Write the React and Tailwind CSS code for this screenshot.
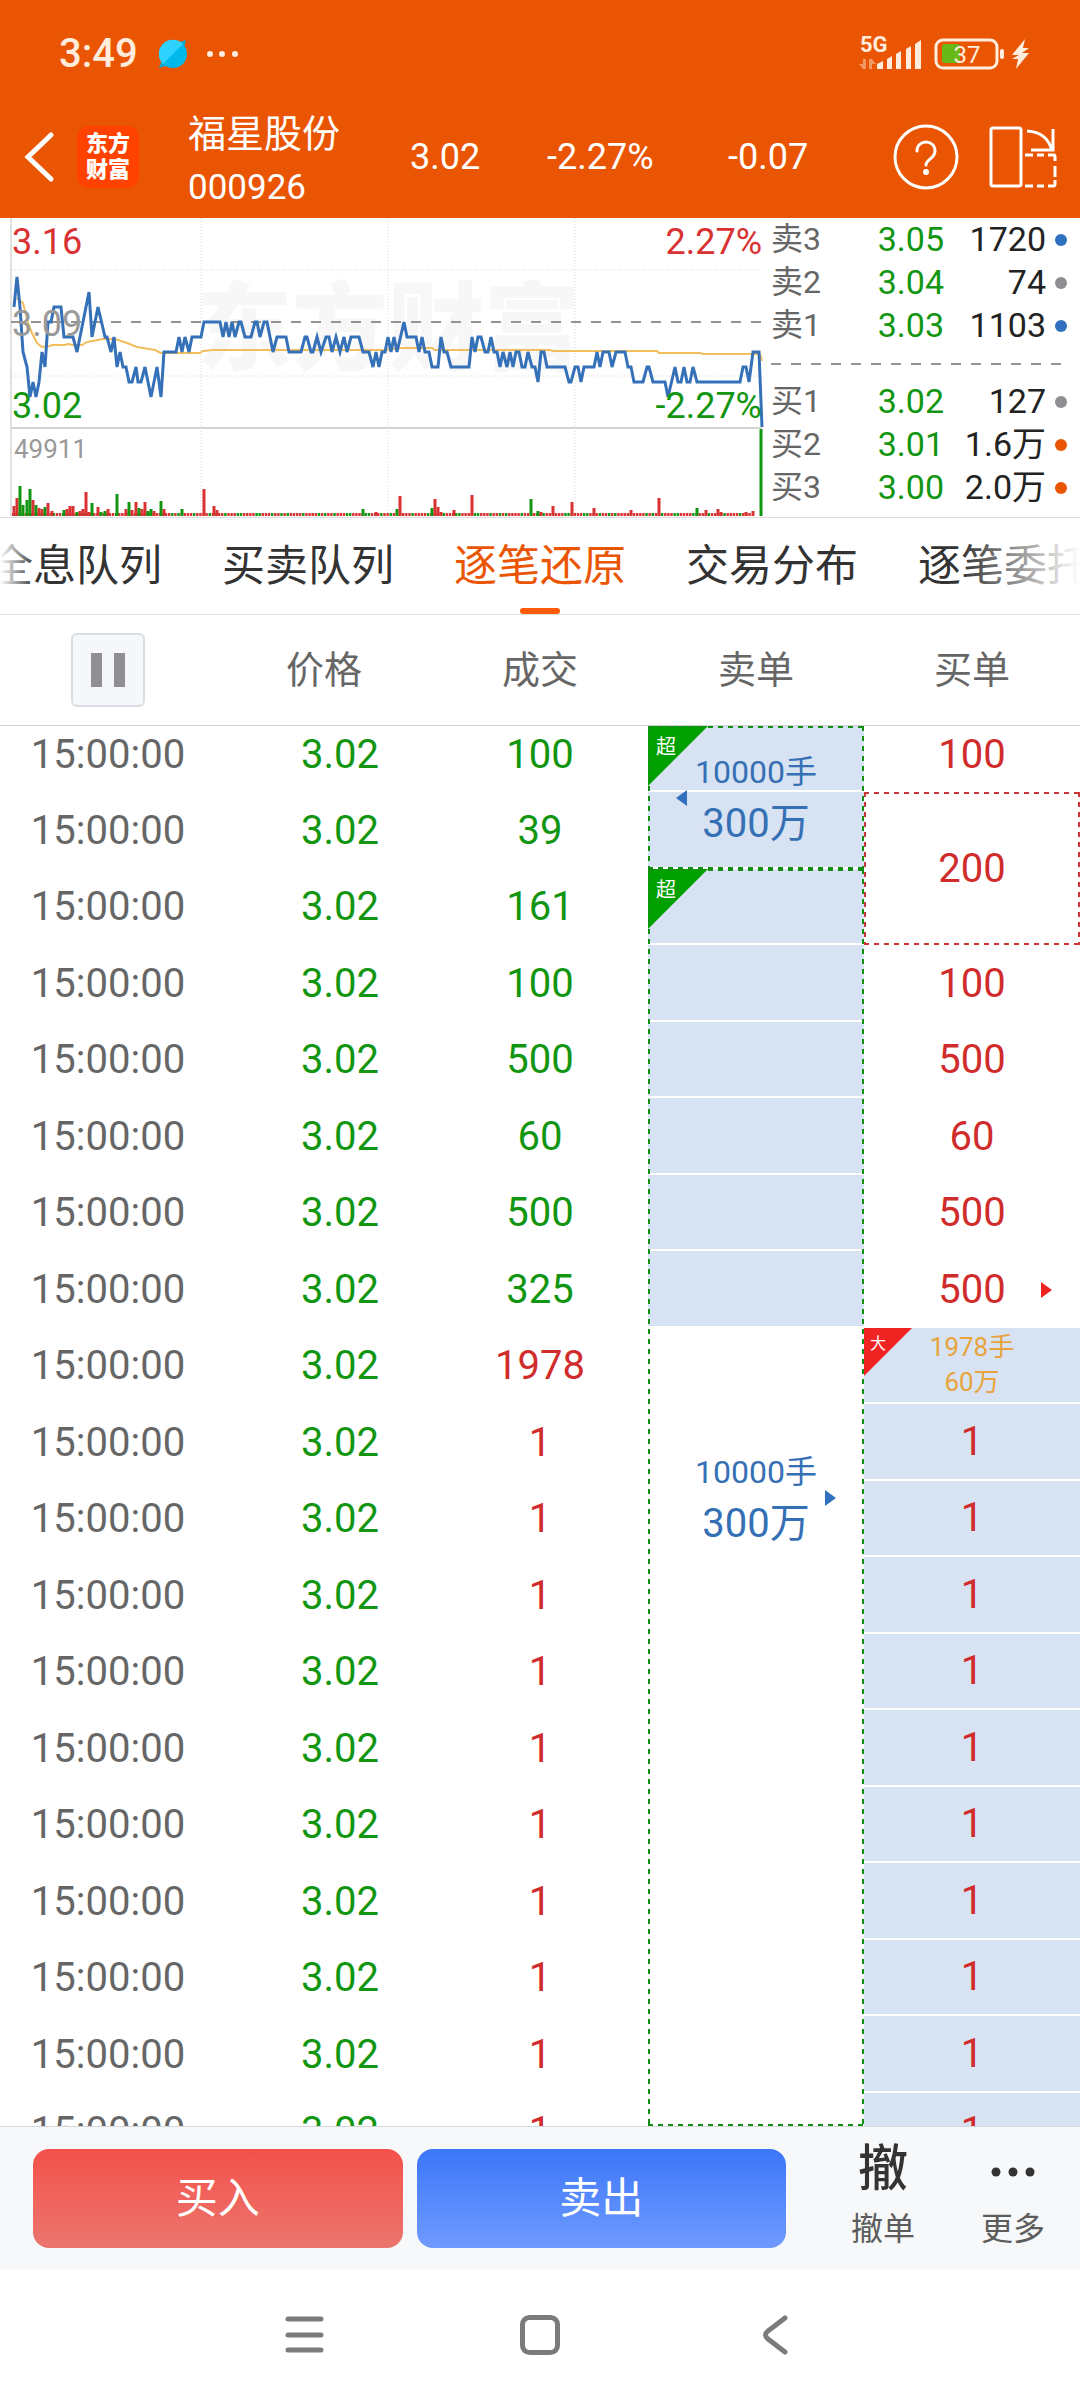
import { useState } from 'react'
import clsx from 'clsx'

const TABS = ['全息队列', '买卖队列', '逐笔还原', '交易分布', '逐笔委托']

const ASKS = [
  { label: '卖3', price: '3.05', qty: '1720', dot: 'bg-[#3070be]' },
  { label: '卖2', price: '3.04', qty: '74', dot: 'bg-[#8e8e93]' },
  { label: '卖1', price: '3.03', qty: '1103', dot: 'bg-[#3070be]' },
]

const BIDS = [
  { label: '买1', price: '3.02', qty: '127', dot: 'bg-[#8e8e93]' },
  { label: '买2', price: '3.01', qty: '1.6万', dot: 'bg-[#ea5504]' },
  { label: '买3', price: '3.00', qty: '2.0万', dot: 'bg-[#ea5504]' },
]

const VOLUMES = [100, 39, 161, 100, 500, 60, 500, 325, 1978, 1, 1, 1, 1, 1, 1, 1, 1, 1, 1]

// One buy order can span several fills
const BUY_LOTS = { 0: 100, 1: 200, 3: 100, 4: 500, 5: 60, 6: 500, 7: 500 }

// [x, cents above / below the previous close]
const PRICE_POINTS = [
  [14, 1], [17, 3], [20, 1], [23, -2], [27, -3], [30, -5], [33, -4], [36, -5], [39, -4], [42, -2], [45, -3],
  [48, 0], [51, 0], [54, 1], [61, 1], [64, -1], [73, -1], [77, -2], [83, 0], [89, 2], [92, -1], [98, 1],
  [105, -1], [107, -1], [111, -2], [114, -1], [117, -3], [120, -2], [123, -3], [126, -3], [129, -4], [132, -4],
  [136, -3], [138, -4], [141, -4], [145, -3], [151, -5], [157, -3], [161, -5], [164, -2], [176, -2], [179, -1],
  [182, -2], [185, -1], [189, -2], [192, -1], [201, -1], [204, 0], [220, 0], [223, -1], [226, 0], [229, -1],
  [232, 0], [235, -1], [239, 0], [241, 0], [245, -1], [251, -1], [255, 0], [257, 0], [260, -1], [264, 0],
  [267, 0], [273, -2], [277, -1], [286, -1], [289, -2], [301, -2], [305, -1], [307, -1], [311, -2], [313, -2],
  [317, -1], [321, -2], [326, -1], [329, -1], [332, -2], [336, -1], [340, -2], [344, -1], [347, -2], [351, -1],
  [359, -1], [363, -2], [369, -2], [373, -3], [376, -2], [379, -3], [382, -2], [385, -2], [388, -1], [391, -2],
  [394, -1], [397, -2], [404, 0], [407, -1], [416, -1], [419, -2], [422, -1], [425, -2], [429, -2], [432, -3],
  [438, -3], [441, -1], [444, -2], [447, -2], [451, -3], [469, -3], [472, -1], [475, -2], [478, -1], [481, -1],
  [485, -2], [488, -2], [491, -1], [494, -2], [497, -2], [500, -3], [503, -2], [507, -3], [510, -2], [513, -3],
  [516, -2], [519, -2], [522, -3], [525, -3], [528, -2], [532, -3], [535, -3], [538, -4], [541, -2], [544, -2],
  [547, -3], [565, -3], [569, -4], [571, -4], [575, -3], [578, -3], [581, -4], [584, -3], [594, -3], [597, -2],
  [600, -3], [603, -2], [609, -2], [612, -3], [616, -2], [625, -2], [628, -3], [631, -3], [634, -4], [643, -4],
  [647, -3], [649, -3], [653, -4], [665, -4], [668, -5], [675, -3], [678, -4], [681, -4], [684, -3], [687, -4],
  [690, -4], [693, -3], [697, -4], [740, -4], [743, -3], [746, -3], [749, -4], [753, -2], [759, -2], [762, -7],
]

const AVERAGE_LINE =
  '17,80 23,85 28,105 32,115 37,125 42,129 50,128 52,127 65,127 68,126 73,127 82,127 87,124 103,121 115,121 127,125 137,129 155,132 161,135 200,135 203,133 213,132 385,132 400,130 432,130 435,132 550,132 553,133 657,133 659,135 700,135 703,136 760,136 762,143'

// [x, height, rising]
const SPIKES = [
  [14, 10, 1], [17, 18, 1], [20, 30, 0], [23, 11, 0], [27, 16, 0], [30, 27, 0], [33, 16, 1], [36, 11, 0],
  [39, 8, 1], [42, 7, 1], [45, 9, 0], [48, 13, 1], [52, 5, 1], [64, 6, 0], [67, 7, 1], [70, 10, 1], [73, 10, 1],
  [77, 4, 0], [80, 5, 1], [83, 7, 1], [86, 24, 1], [89, 4, 1], [92, 13, 0], [98, 9, 1], [101, 4, 0], [105, 5, 0],
  [108, 7, 1], [117, 22, 0], [126, 7, 1], [129, 14, 0], [132, 6, 1], [136, 14, 1], [139, 8, 0], [142, 7, 1],
  [145, 14, 1], [148, 5, 0], [151, 7, 0], [154, 5, 1], [161, 15, 0], [164, 7, 1], [182, 7, 0], [204, 27, 1],
  [214, 10, 1], [217, 6, 1], [363, 7, 0], [376, 4, 1], [397, 7, 0], [400, 20, 1], [432, 8, 0], [435, 17, 1],
  [438, 9, 1], [441, 4, 1], [454, 6, 1], [472, 21, 1], [531, 17, 0], [538, 5, 0], [541, 4, 1], [553, 10, 1],
  [572, 14, 1], [594, 8, 1], [631, 6, 1], [659, 18, 1], [697, 8, 0], [706, 6, 1], [718, 7, 1], [721, 4, 1],
  [746, 4, 1], [753, 5, 1], [761, 87, 0],
]

const RED = '#d83232'
const GREEN = '#129612'

const StatusBar = () => (
  <div className="flex h-[108px] items-center justify-between pl-[59px] pr-[45px] text-[#ffecdc]">
    <div className="flex items-center gap-5">
      <span className="text-[40px] font-medium">3:49</span>
      <svg width="80" height="30" viewBox="0 0 80 30" aria-hidden="true">
        <path d="M1 29 4 20 22 3 28 1 26 9 8 27z" fill="#12a6c8" />
        <circle cx="15" cy="15" r="14" fill="#00b9ea" />
        <path d="M5 25A14 14 0 1 1 25 5z" fill="#2fd2ff" />
        <circle cx="52" cy="15" r="3" fill="currentColor" />
        <circle cx="64" cy="15" r="3" fill="currentColor" />
        <circle cx="77" cy="15" r="3" fill="currentColor" />
      </svg>
    </div>
    <svg width="180" height="40" viewBox="0 0 180 40" fill="currentColor" className="overflow-visible" aria-hidden="true">
      <text x="5" y="18" fontSize="22" fontWeight="700">5G</text>
      <path d="M11 25v10H8l-4-5h4v-5zM14 35V25h3l4 5h-4v5z" opacity=".45" />
      <path d="M22 35v-5l6-3v8zM32 35V25l5-3v13zM41 35V20l5-3v18zM51 35V15l5-3v23zM60 35V10l6-4v29z" />
      <rect x="87" y="10" width="18" height="19" rx="3" fill="#66b916" />
      <rect x="81" y="6" width="61" height="28" rx="7" fill="none" stroke="currentColor" strokeWidth="3" />
      <rect x="145" y="15" width="4" height="10" rx="2" />
      <text x="112" y="29" fontSize="24" textAnchor="middle">37</text>
      <path d="M170 5 157 21h7l-7 4h6l-2 10 13-16h-7l7-5h-6z" />
    </svg>
  </div>
)

const QuoteHeader = () => (
  <div className="flex h-[110px] items-center pb-3 pl-6 pr-[23px] text-white">
    <button type="button" aria-label="返回" className="w-8">
      <svg width="32" height="52" viewBox="0 0 32 52" fill="none" stroke="currentColor" strokeWidth="5">
        <path d="M27 4 4 26 27 48" strokeLinecap="round" />
      </svg>
    </button>
    <div className="ml-[21px] flex h-[62px] w-[62px] flex-col items-center justify-center rounded-xl bg-[#ff4200] text-[22px] leading-[26px] font-black">
      <span>东方</span>
      <span>财富</span>
    </div>
    <div className="ml-[49px] w-[222px] pt-2">
      <h1 className="text-[38px] leading-[54px]">福星股份</h1>
      <p className="text-[35px] leading-[54px]">000926</p>
    </div>
    <span className="w-[137px] text-[36px]">3.02</span>
    <span className="w-[181px] text-[36px]">-2.27%</span>
    <span className="flex-1 text-[36px]">-0.07</span>
    <div className="flex gap-[30px]">
      <button type="button" aria-label="帮助">
        <svg width="66" height="66" viewBox="0 0 66 66" fill="none" stroke="currentColor" strokeWidth="3">
          <circle cx="33" cy="33" r="31" />
          <path d="M24 27c0-12 18-12 18 0 0 8-9 8-9 14" strokeWidth="3" strokeLinecap="round" />
          <circle cx="33" cy="48" r="3" fill="currentColor" stroke="none" />
        </svg>
      </button>
      <button type="button" aria-label="横屏">
        <svg width="68" height="66" viewBox="0 0 68 66" fill="none" stroke="currentColor" strokeWidth="3">
          <rect x="2" y="4" width="30" height="58" rx="2" />
          <path d="M38 7c14 1 21 7 25 19M64 5v21H42" />
          <path d="M36 31h8M48 31h7M59 31h6q1 0 1 2v4M66 42v11M66 56v4q0 2-2 2h-5M55 62h-7M44 62h-8" />
        </svg>
      </button>
    </div>
  </div>
)

const TrendChart = () => (
  <svg viewBox="0 0 764 299" className="h-auto w-full" role="img" aria-label="分时走势">
    <text x="196" y="144" fontSize="96" fontWeight="900" fill="#f7f7f7">东方财富</text>
    <g stroke="#d8d8d8" strokeDasharray="1 2" strokeWidth="1">
      <path d="M12 52H762M12 158H762" />
      <path d="M201 0V298M388 0V298M575 0V298" />
    </g>
    <path d="M11 0V298" stroke="#e0e0e0" strokeWidth="2" />
    <path d="M11 210H762" stroke="#d4d4d4" strokeWidth="2" />
    <path d="M11 104H762" stroke="#949494" strokeWidth="2" strokeDasharray="10 10" />
    <g fontSize="36">
      <text x="12" y="36" fill={RED}>3.16</text>
      <text x="762" y="36" textAnchor="end" fill={RED}>2.27%</text>
    </g>
    <polyline points={AVERAGE_LINE} fill="none" stroke="#f2bd5c" strokeWidth="2" />
    <polyline
      points={PRICE_POINTS.map(([x, c]) => `${x},${104 - c * 15}`).join(' ')}
      fill="none"
      stroke="#3571b8"
      strokeWidth="3"
    />
    <g fontSize="36">
      <text x="12" y="118" fill="#999">3.09</text>
      <text x="12" y="200" fill={GREEN}>3.02</text>
      <text x="762" y="200" textAnchor="end" fill={GREEN}>-2.27%</text>
    </g>
    <text x="14" y="240" fontSize="26" fill="#999">49911</text>
    <g>
      {Array.from({ length: 237 }, (_, i) => (
        <rect key={i} x={12 + i * 3.12} y="295" width="2.4" height="3" fill={i % 5 === 3 || i % 7 === 2 ? GREEN : RED} />
      ))}
      {SPIKES.map(([x, h, up]) => (
        <rect key={x} x={x - 1.5} y={298 - h} width="3" height={h} fill={up ? RED : GREEN} />
      ))}
    </g>
  </svg>
)

const DepthTable = ({ rows, name }) => (
  <table className="w-full text-[34px]" aria-label={name}>
    <tbody>
      {rows.map((row) => (
        <tr key={row.label} className="h-[43px] leading-[43px]">
          <th scope="row" className="p-0 text-left text-[32px] font-normal text-[#666]">{row.label}</th>
          <td className="p-0 text-right text-[#129612]">{row.price}</td>
          <td className="w-[102px] p-0 text-right text-[#222]">{row.qty}</td>
          <td className="w-[21px] p-0">
            <span className={clsx('ml-auto block h-3 w-3 rounded-full', row.dot)} />
          </td>
        </tr>
      ))}
    </tbody>
  </table>
)

const DashedFrame = ({ tone }) => {
  const across = tone === 'green'
    ? 'bg-[repeating-linear-gradient(90deg,#128f12_0_5px,transparent_5px_10px)]'
    : 'bg-[repeating-linear-gradient(90deg,#cc3535_0_5px,transparent_5px_10px)]'
  const down = tone === 'green'
    ? 'bg-[repeating-linear-gradient(180deg,#128f12_0_5px,transparent_5px_10px)]'
    : 'bg-[repeating-linear-gradient(180deg,#cc3535_0_5px,transparent_5px_10px)]'
  return (
    <div className="pointer-events-none absolute inset-0">
      <div className={clsx('absolute inset-x-0 top-0 h-0.5', across)} />
      <div className={clsx('absolute inset-x-0 bottom-0 h-0.5', across)} />
      <div className={clsx('absolute inset-y-0 left-0 w-0.5', down)} />
      <div className={clsx('absolute inset-y-0 right-0 w-0.5', down)} />
    </div>
  )
}

const SuperTag = () => (
  <div className="absolute top-0 left-0 h-[60px] w-[60px] bg-[#00a000] pt-2 pl-2 text-left text-[20px] leading-[26px] text-white [clip-path:polygon(0_0,100%_0,0_100%)]">
    超
  </div>
)

const Arrow = ({ left, className }) => (
  <svg width="11" height="16" viewBox="0 0 11 16" fill="currentColor" className={clsx('absolute inset-y-0 my-auto', className)} aria-hidden="true">
    <path d={left ? 'M11 0v16L0 8z' : 'M0 0v16l11-8z'} />
  </svg>
)

const Stripes = ({ heights }) => (
  <div className="absolute inset-0 flex flex-col">
    {heights.map((height, i) => (
      <div key={i} className="shrink-0 border-b-2 border-white bg-[#d7e3f2]" style={{ height }} />
    ))}
  </div>
)

const SellOrder = () => (
  <div className="relative text-[#3570b5]">
    <p className="text-[32px] leading-[51px]">10000手</p>
    <p className="text-[40px] leading-[51px]">300万</p>
  </div>
)

const SellCell = ({ index }) => {
  if (index === 0) {
    return (
      <td rowSpan={2} className="relative p-0">
        <Stripes heights={[66, 77]} />
        <SuperTag />
        <SellOrder />
        <Arrow left className="left-7 text-[#3070be]" />
        <DashedFrame tone="green" />
      </td>
    )
  }
  if (index === 2) {
    return (
      <td rowSpan={17} className="relative p-0">
        <Stripes heights={[76, 77, 76, 77, 76, 77]} />
        <SuperTag />
        <SellOrder />
        <Arrow className="right-7 text-[#3070be]" />
        <DashedFrame tone="green" />
      </td>
    )
  }
  return null
}

// The last row is cut off by the trade bar
const Clip = ({ on, children }) => (on ? <div className="h-[33px] overflow-hidden leading-[77px]">{children}</div> : children)

const BuyCell = ({ index, last }) => {
  if (index === 1) {
    return (
      <td rowSpan={2} className="relative p-0 text-[#d02c2c]">
        {BUY_LOTS[index]}
        <DashedFrame tone="red" />
      </td>
    )
  }
  if (index === 2) return null
  if (index === 8) {
    return (
      <td className="relative border-b-2 border-white bg-[#d7e3f2] p-0 text-[26px] leading-[35px] text-[#e8a33c]">
        <div className="absolute top-0 left-0 h-12 w-12 bg-[#f02323] pt-1 pl-1.5 text-left text-[16px] leading-[24px] text-white [clip-path:polygon(0_0,100%_0,0_100%)]">
          大
        </div>
        <p>1978手</p>
        <p>60万</p>
      </td>
    )
  }
  if (index > 8) {
    return (
      <td className={clsx('bg-[#d7e3f2] p-0 text-[#d02c2c]', !last && 'border-b-2 border-white')}>
        <Clip on={last}>1</Clip>
      </td>
    )
  }
  return (
    <td className={clsx('relative p-0 text-[#d02c2c]', index === 0 && 'pb-2')}>
      {BUY_LOTS[index]}
      {index === 7 && <Arrow className="right-7 text-[#f02323]" />}
    </td>
  )
}

const TradeTable = () => {
  const [paused, setPaused] = useState(false)
  return (
    <table className="w-full table-fixed border-separate border-spacing-0 text-center text-[40px] leading-[56px]">
      <thead className="text-[38px] text-[#666]">
        <tr className="h-[111px]">
          <th className="border-b border-[#d4d4d4] p-0">
            <button
              type="button"
              aria-label="暂停"
              aria-pressed={paused}
              onClick={() => setPaused(!paused)}
              className="mx-auto flex h-[74px] w-[74px] items-center justify-center gap-3 rounded-md border-2 border-[#dadde2] bg-[#f6f7fa]"
            >
              <span className="h-[34px] w-[11px] bg-[#8f8f94]" />
              <span className="h-[34px] w-[11px] bg-[#8f8f94]" />
            </button>
          </th>
          {['价格', '成交', '卖单', '买单'].map((col) => (
            <th key={col} className="border-b border-[#d4d4d4] p-0 font-normal">{col}</th>
          ))}
        </tr>
      </thead>
      <tbody>
        {VOLUMES.map((volume, i) => {
          const last = i === VOLUMES.length - 1
          const pad = i === 0 && 'pb-2'
          const height = i === 0 ? 'h-[66px]' : last ? 'h-[33px]' : i % 2 ? 'h-[77px]' : 'h-[76px]'
          return (
            <tr key={i} className={height}>
              <td className={clsx('p-0 text-[#666]', pad)}><Clip on={last}>15:00:00</Clip></td>
              <td className={clsx('p-0 pl-8 text-[#129612]', pad)}><Clip on={last}>3.02</Clip></td>
              <td className={clsx('p-0', pad, i < 8 ? 'text-[#129612]' : 'text-[#d02c2c]')}>
                <Clip on={last}>{volume}</Clip>
              </td>
              <SellCell index={i} />
              <BuyCell index={i} last={last} />
            </tr>
          )
        })}
      </tbody>
    </table>
  )
}

const TradeBar = () => (
  <div className="flex h-36 items-center border-t border-[#d3d6da] bg-[#f6f8fa] pr-0.5 pl-[33px]">
    <div className="flex flex-1 gap-3.5 text-[42px] text-white">
      <button type="button" className="h-[99px] flex-1 rounded-2xl bg-linear-to-b from-[#f4504a] to-[#ea756e]">买入</button>
      <button type="button" className="h-[99px] flex-1 rounded-2xl bg-linear-to-b from-[#3b76f8] to-[#6f9aff]">卖出</button>
    </div>
    <button type="button" className="ml-8 flex w-[130px] flex-col items-center text-[#333]">
      <span className="text-[50px] leading-[60px] font-medium">撤</span>
      <span className="text-[32px] leading-[60px] text-[#5c5c5c]">撤单</span>
    </button>
    <button type="button" className="flex w-[130px] flex-col items-center text-[#333]">
      <svg width="44" height="60" viewBox="0 0 44 60" fill="currentColor" aria-hidden="true">
        <circle cx="5" cy="33" r="4.5" />
        <circle cx="22" cy="33" r="4.5" />
        <circle cx="39" cy="33" r="4.5" />
      </svg>
      <span className="text-[32px] leading-[60px] text-[#5c5c5c]">更多</span>
    </button>
  </div>
)

const SystemNav = () => (
  <nav className="flex h-[130px] items-center justify-center gap-[196px] bg-white text-[#7c7c7c]">
    <button type="button" aria-label="最近任务">
      <svg width="40" height="40" viewBox="0 0 40 40" stroke="currentColor" strokeWidth="5" strokeLinecap="round">
        <path d="M4 4h33M4 20h33M4 35h33" />
      </svg>
    </button>
    <button type="button" aria-label="主屏幕">
      <svg width="40" height="40" viewBox="0 0 40 40" fill="none" stroke="currentColor" strokeWidth="5">
        <rect x="2.5" y="2.5" width="35" height="35" rx="7" />
      </svg>
    </button>
    <button type="button" aria-label="返回上一级">
      <svg width="40" height="40" viewBox="0 0 40 40" fill="none" stroke="currentColor" strokeWidth="5" strokeLinecap="round">
        <path d="M29 3 12 16q-5 4 0 8l17 13" />
      </svg>
    </button>
  </nav>
)

const App = () => {
  const [tab, setTab] = useState('逐笔还原')

  return (
    <div className="w-full overflow-hidden bg-white font-['Roboto','Noto_Sans_CJK_SC',sans-serif]">
      <header className="bg-[#ea5504]">
        <StatusBar />
        <QuoteHeader />
      </header>

      {/* Chart and order book */}
      <section className="flex items-start border-b border-[#dcdcdc]">
        <div className="flex w-[764px] shrink-0">
          <TrendChart />
        </div>
        <div className="flex-1 pr-[13px] pl-[7px]">
          <DepthTable rows={ASKS} name="卖盘" />
          <div className="flex h-[33px] items-center">
            <div className="h-0.5 w-full bg-[repeating-linear-gradient(90deg,#949494_0_10px,transparent_10px_20px)]" />
          </div>
          <DepthTable rows={BIDS} name="买盘" />
        </div>
      </section>

      {/* Tabs */}
      <div role="tablist" className="relative flex h-[97px] justify-center gap-[60px] overflow-hidden border-b border-[#e0e0e0]">
        {TABS.map((name) => (
          <button
            key={name}
            type="button"
            role="tab"
            aria-selected={tab === name}
            onClick={() => setTab(name)}
            className={clsx('relative shrink-0 text-[43px] leading-[96px]', tab === name ? 'text-[#ea5504]' : 'text-[#333]')}
          >
            {name}
            {tab === name && <span className="absolute inset-x-0 bottom-0 mx-auto h-1.5 w-10 rounded-full bg-[#ff5a0a]" />}
          </button>
        ))}
        <div className="pointer-events-none absolute inset-y-0 left-0 w-9 bg-linear-to-r from-white to-transparent" />
        <div className="pointer-events-none absolute inset-y-0 right-0 w-[120px] bg-linear-to-l from-white to-transparent" />
      </div>

      <TradeTable />
      <TradeBar />
      <SystemNav />
    </div>
  )
}

export default App
